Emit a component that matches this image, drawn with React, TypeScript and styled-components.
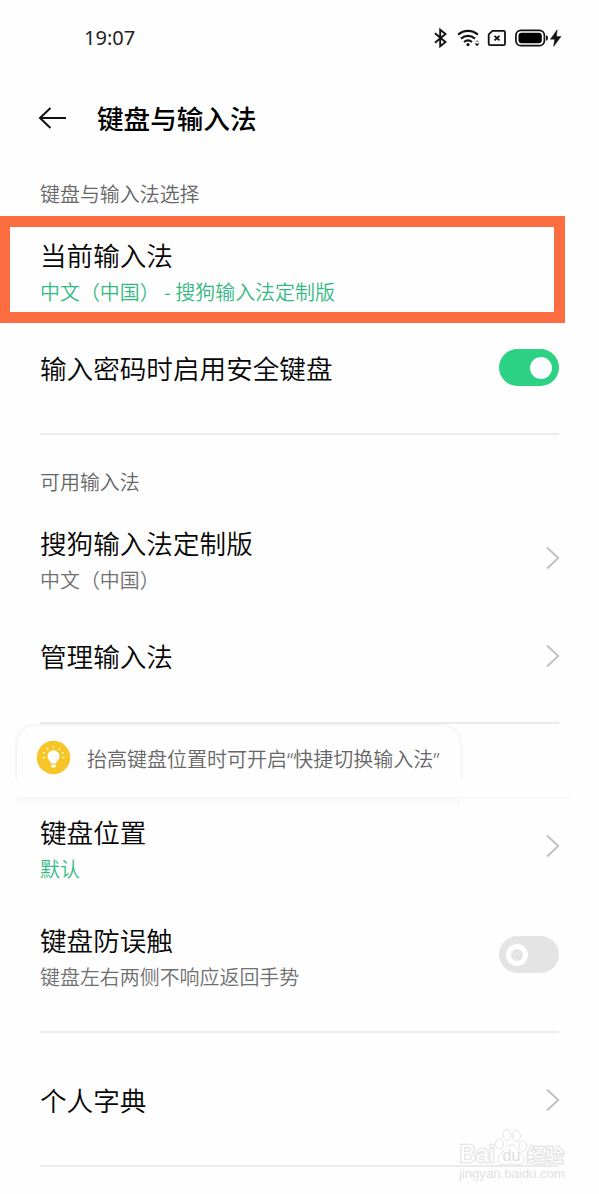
import React from "react";
import styled, { createGlobalStyle } from "styled-components";

const GlobalStyle = createGlobalStyle`
  * { box-sizing: border-box; }
  body {
    margin: 0;
    background: #fefefe;
    font-family: "Noto Sans CJK SC", "Noto Sans", sans-serif;
    color: #111;
  }
`;

const Screen = styled.main`
  position: relative;
  display: flex;
  flex-direction: column;
  width: 599px;
  height: 1194px;
  overflow: hidden;
  background: #fefefe;
`;

const StatusBar = styled.div`
  display: flex;
  align-items: center;
  justify-content: space-between;
  height: 76px;
  padding: 0 37px 0 84px;
`;

const Clock = styled.span`
  font-family: "Noto Sans", sans-serif;
  font-size: 20px;
  line-height: 24px;
  color: #222;
`;

const Header = styled.header`
  display: flex;
  align-items: center;
  gap: 29px;
  height: 84px;
  padding-left: 38px;
`;

const Title = styled.h1`
  margin: 0;
  font-size: 26.6px;
  line-height: 32px;
  font-weight: 500;
  color: #000;
`;

const SectionLabel = styled.div<{ $height: number; $top: number }>`
  height: ${(p) => p.$height}px;
  padding: ${(p) => p.$top}px 0 0 40px;
  font-size: 19.95px;
  line-height: 24px;
  font-weight: 350;
  color: #666;
`;

const Row = styled.div<{ $height: number; $top: number }>`
  display: flex;
  justify-content: space-between;
  height: ${(p) => p.$height}px;
  padding: ${(p) => p.$top}px 39px 0 40px;
`;

const Highlight = styled.div`
  width: 565px;
  height: 107px;
  padding: 12px 0 0 30px;
  border: 11px solid #fc6e42;
  border-left-width: 10px;
`;

const RowText = styled.div`
  display: flex;
  flex-direction: column;
  gap: 9px;
`;

const RowTitle = styled.div`
  font-size: 26.6px;
  line-height: 32px;
  font-weight: 350;
  color: #060606;
  white-space: nowrap;
`;

const RowSub = styled.div<{ $accent?: boolean }>`
  font-size: 19.95px;
  line-height: 24px;
  font-weight: 350;
  color: ${(p) => (p.$accent ? "#35b984" : "#707070")};
  white-space: pre;
`;

const Trailing = styled.div<{ $top: number }>`
  display: flex;
  align-self: flex-start;
  margin-top: ${(p) => p.$top}px;
`;

const Divider = styled.hr`
  flex: none;
  width: 519px;
  height: 2px;
  margin: 0 0 0 40px;
  border: 0;
  background: #ebebeb;
`;

const Track = styled.div<{ $on?: boolean }>`
  display: flex;
  align-items: center;
  justify-content: ${(p) => (p.$on ? "flex-end" : "flex-start")};
  width: 60px;
  height: 37px;
  margin-right: 1px;
  padding: 0 7px;
  border-radius: 19px;
  background: ${(p) => (p.$on ? "#2dd184" : "#e4e4e4")};
`;

const Knob = styled.div<{ $on?: boolean }>`
  width: 22px;
  height: 22px;
  border: ${(p) => (p.$on ? "11px" : "5px")} solid #fff;
  border-radius: 50%;
`;

const TipArea = styled.div`
  height: 92px;
  padding: 2px 27px 0 17px;
`;

const TipCard = styled.div`
  display: flex;
  align-items: center;
  gap: 16px;
  width: 443px;
  height: 54px;
  padding: 8px 0 0 19px;
  border-radius: 18px 18px 0 0;
  background: #fefefe;
  box-shadow: 0 0 5px rgba(0, 0, 0, 0.1);
`;

const TipFoot = styled.div`
  position: relative;
  width: 555px;
  height: 18px;
  background: #fefefe;
  border-bottom: 1px solid #f8f7f1;
`;

const TipFade = styled.div`
  width: 443px;
  height: 10px;
  background: linear-gradient(#f7f7f7, #fefefe);
`;

const TipText = styled.span`
  font-size: 20px;
  line-height: 24px;
  font-weight: 350;
  color: #666;
  white-space: nowrap;
  padding-top: 4px;
`;

const Quote = styled.span`
  font-family: "Noto Sans", sans-serif;
`;

const Watermark = styled.svg`
  position: absolute;
  left: 450px;
  top: 1122px;
`;

const Switch = ({ on }: { on?: boolean }) => (
  <Track $on={on} role="switch" aria-checked={!!on}>
    <Knob $on={on} />
  </Track>
);

const Chevron = () => (
  <svg width="14" height="24" viewBox="0 0 14 24" fill="none" stroke="#bfbfbf" strokeWidth="1.8">
    <path d="M1 1.5 12.3 12 1 22.5" />
  </svg>
);

const BackArrow = () => (
  <svg width="30" height="24" viewBox="0 0 30 24" fill="none" stroke="#111" strokeWidth="2">
    <path d="M28 12H2M12.5 2 2 12 12.5 22" />
  </svg>
);

const StatusIcons = () => (
  <svg width="130" height="24" viewBox="0 0 130 24" fill="none" stroke="#111">
    <path d="M3 7.2 13.5 16 8.2 20.3V3.7L13.5 8 3 16.8" strokeWidth="1.9" />
    <g strokeWidth="2.2">
      <path d="M26.2 8.6C32 3.6 40 3.6 45.8 8.6" />
      <path d="M29 12.6C33.2 9 38.8 9 43 12.6" />
      <path d="M32 16C34.4 14.1 37.6 14.1 40 16" />
    </g>
    <circle cx="36" cy="18.6" r="1.6" fill="#111" stroke="none" />
    <path d="M42.9 16 45 13.9 47.1 16Z" fill="#999" stroke="none" />
    <path d="M42.6 17.5 45 20.3 47.4 17.5Z" fill="#111" stroke="none" />
    <path d="M60.5 4.8H71.5Q73 4.8 73 6.3V17.7Q73 19.2 71.5 19.2H58.2Q56.7 19.2 56.7 17.7V8.4Z" strokeWidth="1.8" />
    <path d="M62.5 9.8 67.5 14.4M67.5 9.8 62.5 14.4" strokeWidth="1.8" />
    <rect x="83.9" y="4.3" width="28.5" height="15.4" rx="5" strokeWidth="1.7" />
    <rect x="86.5" y="6.7" width="23.3" height="10.6" rx="3" fill="#000" stroke="none" />
    <path d="M114 9.3Q116 9.3 116 12T114 14.7Z" fill="#111" stroke="none" />
    <path d="M125.2 3.8 118.4 13.2H122.8L121.6 20.4 129 10.4H124.4Z" fill="#111" stroke="#111" strokeWidth="0.5" />
  </svg>
);

const Bulb = () => (
  <svg width="35" height="35" viewBox="0 0 35 35">
    <circle cx="17.5" cy="17.5" r="16.7" fill="#f6c526" />
    <path
      d="M17.5 10.2a6 6 0 0 0-6 6c0 2.4 1.3 3.7 2.5 5 .6.7.8 1.5.8 2.3h5.4c0-.8.2-1.6.8-2.3 1.2-1.3 2.5-2.6 2.5-5a6 6 0 0 0-6-6ZM15.2 24.8h4.6v1.4q0 1.2-1.2 1.2h-2.2q-1.2 0-1.2-1.2Z"
      fill="#fff"
    />
    <path
      d="M17.5 6.2v1.4M11.2 8.2l.8 1.3M23.8 8.2l-.8 1.3M7.4 12.6l1.3.6M27.6 12.6l-1.3.6M7 17.6h1.3M28 17.6h-1.3"
      stroke="#fff"
      strokeWidth="1.1"
      strokeLinecap="round"
    />
  </svg>
);

const BrandMark = () => (
  <Watermark width="125" height="64" viewBox="0 0 125 64" fill="#fff" stroke="#e4e4e4" strokeWidth="1">
    <g fontFamily='"Liberation Sans", sans-serif'>
      <text x="9.5" y="40" fontSize="24" textLength="35" lengthAdjust="spacingAndGlyphs" stroke="#e6e6e6" strokeWidth="2.6" paintOrder="stroke">
        Bai
      </text>
      <ellipse cx="49.5" cy="22" rx="4" ry="5.2" />
      <ellipse cx="57" cy="13" rx="4" ry="5.6" />
      <ellipse cx="66.5" cy="14" rx="4" ry="5.6" />
      <ellipse cx="73" cy="24" rx="3.8" ry="5.2" />
      <path d="M61 23C55 23 54 29 51 32 47 35 47 41 52 42.5 55 43 58 41.8 61 41.8S67 43 70 42.5C75 41 75 35 71 32 68 29 67 23 61 23Z" />
      <text x="52.5" y="39" fontSize="16" fill="#dcdcdc" stroke="none">
        du
      </text>
      <text x="9" y="56" fontSize="13.4" textLength="106" fill="#e2e2e2" stroke="none">
        jingyan.baidu.com
      </text>
    </g>
    <text x="77" y="39.5" fontSize="18.5" fontFamily='"Noto Sans CJK SC", sans-serif' strokeWidth="2.4" paintOrder="stroke">
      经验
    </text>
  </Watermark>
);

export default function App() {
  return (
    <>
      <GlobalStyle />
      <Screen>
        <StatusBar>
          <Clock>19:07</Clock>
          <StatusIcons />
        </StatusBar>
        <Header>
          <BackArrow />
          <Title>键盘与输入法</Title>
        </Header>
        <SectionLabel $height={56} $top={22}>键盘与输入法选择</SectionLabel>
        <Highlight>
          <RowText>
            <RowTitle>当前输入法</RowTitle>
            <RowSub $accent>中文（中国） - 搜狗输入法定制版</RowSub>
          </RowText>
        </Highlight>
        <Row $height={110} $top={29}>
          <RowTitle>输入密码时启用安全键盘</RowTitle>
          <Trailing $top={-3}><Switch on /></Trailing>
        </Row>
        <Divider />
        <SectionLabel $height={79} $top={35}>可用输入法</SectionLabel>
        <Row $height={118} $top={13}>
          <RowText>
            <RowTitle>搜狗输入法定制版</RowTitle>
            <RowSub>中文（中国）</RowSub>
          </RowText>
          <Trailing $top={19}><Chevron /></Trailing>
        </Row>
        <Row $height={90} $top={8}>
          <RowTitle>管理输入法</RowTitle>
          <Trailing $top={4}><Chevron /></Trailing>
        </Row>
        <Divider />
        <TipArea>
          <TipCard>
            <Bulb />
            <TipText>
              抬高键盘位置时可开启<Quote>“</Quote>快捷切换输入法<Quote>”</Quote>
            </TipText>
          </TipCard>
          <TipFoot />
          <TipFade />
        </TipArea>
        <Row $height={108} $top={0}>
          <RowText>
            <RowTitle>键盘位置</RowTitle>
            <RowSub $accent>默认</RowSub>
          </RowText>
          <Trailing $top={18}><Chevron /></Trailing>
        </Row>
        <Row $height={107} $top={0}>
          <RowText>
            <RowTitle>键盘防误触</RowTitle>
            <RowSub>键盘左右两侧不响应返回手势</RowSub>
          </RowText>
          <Trailing $top={12}><Switch /></Trailing>
        </Row>
        <Divider />
        <Row $height={132} $top={51}>
          <RowTitle>个人字典</RowTitle>
          <Trailing $top={4}><Chevron /></Trailing>
        </Row>
        <Divider />
        <BrandMark />
      </Screen>
    </>
  );
}
